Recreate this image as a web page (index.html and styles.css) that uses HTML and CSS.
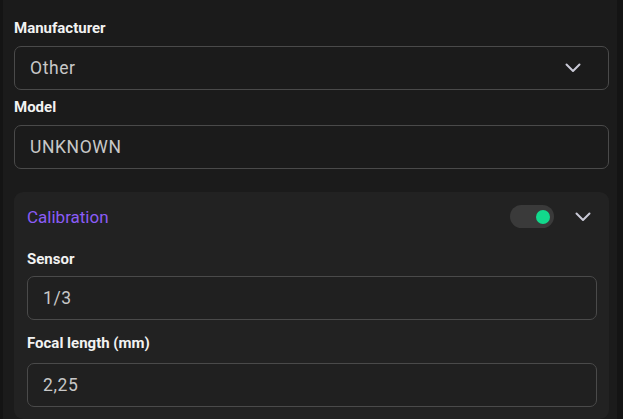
FILE: index.html
```html
<!DOCTYPE html>
<html>
<head>
<meta charset="utf-8">
<link rel="stylesheet" href="styles.css">
</head>
<body>
<div class="panel">
  <div class="field">
    <label class="label">Manufacturer</label>
    <div class="control select">
      <span class="value">Other</span>
      <svg class="chev" width="16" height="10" viewBox="0 0 16 10"><path d="M1.5 1.5 L8 8 L14.5 1.5" fill="none" stroke="#c9c9d6" stroke-width="2" stroke-linecap="round" stroke-linejoin="round"/></svg>
    </div>
  </div>
  <div class="field model">
    <label class="label">Model</label>
    <div class="control"><span class="value">UNKNOWN</span></div>
  </div>
  <div class="card">
    <div class="card-head">
      <span class="title">Calibration</span>
      <div class="toggle"><span class="knob"></span></div>
      <svg class="chev head-chev" width="16" height="10" viewBox="0 0 16 10"><path d="M1.5 1.5 L8 8 L14.5 1.5" fill="none" stroke="#c9c9d6" stroke-width="2" stroke-linecap="round" stroke-linejoin="round"/></svg>
    </div>
    <div class="field sensor">
      <label class="label">Sensor</label>
      <div class="control inner"><span class="value">1/3</span></div>
    </div>
    <div class="field focal">
      <label class="label">Focal length (mm)</label>
      <div class="control inner"><span class="value">2,25</span></div>
    </div>
  </div>
</div>
</body>
</html>
```
FILE: styles.css
```css
html, body {
  margin: 0;
  padding: 0;
  height: 100%;
  background: #141414;
  font-family: Roboto, "Liberation Sans", sans-serif;
  overflow: hidden;
}
.panel {
  margin: 0 6px 0 3px;
  height: 100%;
  background: #1b1b1b;
  padding: 19px 8px 0 11px;
  box-sizing: border-box;
  display: flex;
  flex-direction: column;
}
.field {
  display: flex;
  flex-direction: column;
  gap: 9px;
}
.model { margin-top: 8px; }
.label {
  font-size: 15px;
  line-height: 18px;
  font-weight: 700;
  color: #f2f2f2;
}
.control {
  height: 44px;
  box-sizing: border-box;
  border: 1.5px solid #4a4a4a;
  border-radius: 7px;
  background: #1b1b1b;
  display: flex;
  align-items: center;
  padding: 0 27px 0 15px;
}
.value {
  font-size: 17.5px;
  letter-spacing: 0.6px;
  color: #c8c8c8;
  flex: 1;
}
.chev { display: block; }
.card {
  margin-top: 23px;
  background: #222222;
  border-radius: 9px;
  padding: 13px 12px 0 13px;
  flex: 1;
  display: flex;
  flex-direction: column;
}
.card-head {
  height: 23px;
  display: flex;
  align-items: center;
}
.title {
  font-size: 17px;
  color: #8b5cf6;
  flex: 1;
}
.toggle {
  width: 44px;
  height: 23px;
  border-radius: 12px;
  background: #3a3a3a;
  position: relative;
}
.knob {
  position: absolute;
  width: 14px;
  height: 14px;
  border-radius: 50%;
  background: #12d98c;
  right: 4px;
  top: 4.5px;
}
.head-chev { margin-left: 21px; margin-right: 6px; }
.sensor { margin-top: 22px; gap: 8px; }
.focal { margin-top: 14px; gap: 11px; }
.inner { background: #202020; }
```
